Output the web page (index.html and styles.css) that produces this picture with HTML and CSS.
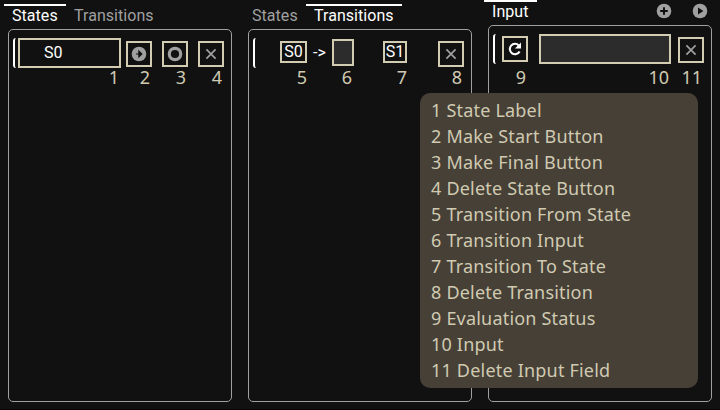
FILE: index.html
```html
<!DOCTYPE html>
<html lang="en">
<head>
<meta charset="utf-8">
<title>Automaton Panels</title>
<link rel="stylesheet" href="styles.css">
</head>
<body>
<main class="columns">
  <section class="column">
    <nav class="tabs"><span class="tab active">States</span><span class="tab wide">Transitions</span></nav>
    <div class="panel">
      <div class="row">
        <i class="bracket"></i>
        <div class="box state-label">S0<b class="num n1">1</b></div>
        <div class="box button"><svg width="16" height="16" viewBox="0 0 16 16"><circle cx="8" cy="8" r="7.3" fill="#a0a0a0"/><path d="M5 8h4M7.9 5.1 10.8 8l-2.9 2.9z" fill="#111" stroke="#111" stroke-width="1.2"/></svg><b class="num n2">2</b></div>
        <div class="box button next"><svg width="16" height="16" viewBox="0 0 16 16"><circle cx="8" cy="8" r="5.7" fill="none" stroke="#a0a0a0" stroke-width="3.2"/></svg><b class="num n3">3</b></div>
        <div class="box button next"><svg width="16" height="16" viewBox="0 0 16 16"><path d="m3.4 3.4 9.2 9.2m0-9.2-9.2 9.2" fill="none" stroke="#a0a0a0" stroke-width="1.7"/></svg><b class="num n4">4</b></div>
      </div>
    </div>
  </section>
  <section class="column">
    <nav class="tabs"><span class="tab">States</span><span class="tab wide active">Transitions</span></nav>
    <div class="panel">
      <div class="row">
        <i class="bracket"></i>
        <div class="box from">S0<b class="num n5">5</b></div>
        <span class="arrow">-&gt;</span>
        <div class="box symbol"><b class="num n6">6</b></div>
        <div class="box to">S1<b class="num n7">7</b></div>
        <div class="box button last"><svg width="16" height="16" viewBox="0 0 16 16"><path d="m3.4 3.4 9.2 9.2m0-9.2-9.2 9.2" fill="none" stroke="#a0a0a0" stroke-width="1.7"/></svg><b class="num n8">8</b></div>
      </div>
    </div>
  </section>
  <section class="column input-column">
    <nav class="tabs"><span class="tab single active">Input</span>
      <span class="tools">
        <svg width="16" height="16" viewBox="0 0 16 16"><circle cx="8" cy="8" r="7.3" fill="#a0a0a0"/><path d="M8 4.2v7.6M4.2 8h7.6" stroke="#111" stroke-width="2"/></svg>
        <svg width="16" height="16" viewBox="0 0 16 16"><circle cx="8" cy="8" r="7.3" fill="#a0a0a0"/><path d="m6 4.6 5.4 3.4L6 11.4z" fill="#111"/></svg>
      </span>
    </nav>
    <div class="panel">
      <div class="row">
        <i class="bracket"></i>
        <div class="box button status"><svg width="16" height="16" viewBox="0 0 16 16"><path d="M12.6 10.5A5.2 5.2 0 1 1 11.8 4.4" fill="none" stroke="#fff" stroke-width="2.1"/><path d="M14 1.5V7.6H7.9z" fill="#fff"/></svg><b class="num n9">9</b></div>
        <div class="box field"><b class="num n10">10</b></div>
        <div class="box button clear"><svg width="16" height="16" viewBox="0 0 16 16"><path d="m3.4 3.4 9.2 9.2m0-9.2-9.2 9.2" fill="none" stroke="#a0a0a0" stroke-width="1.7"/></svg><b class="num n11">11</b></div>
      </div>
    </div>
  </section>
</main>
<div class="legend">
  <p>1 State Label</p>
  <p>2 Make Start Button</p>
  <p>3 Make Final Button</p>
  <p>4 Delete State Button</p>
  <p>5 Transition From State</p>
  <p>6 Transition Input</p>
  <p>7 Transition To State</p>
  <p>8 Delete Transition</p>
  <p>9 Evaluation Status</p>
  <p>10 Input</p>
  <p>11 Delete Input Field</p>
</div>
</body>
</html>
```

FILE: styles.css
```css
* { box-sizing: border-box; }
body {
  margin: 0;
  height: 410px;
  overflow: hidden;
  background: #111;
  color: #fff;
  font: 16px/20px Roboto, sans-serif;
  border-bottom: 1px solid #0c0308;
}
.columns {
  display: grid;
  grid-template-columns: repeat(3, 224px);
  gap: 16px;
  padding: 4px 8px 0;
  height: 402px;
}
.column { display: flex; flex-direction: column; }
.input-column { margin-top: -4px; }
.tabs { display: flex; height: 25px; margin-left: -4px; flex: none; }
.tab { width: 62px; padding: 0 8px; border-top: 2px solid transparent; color: #a0a0a0; letter-spacing: 0.05px; }
.wide { width: 96px; }
.single { width: 53px; }
.tab.active { border-color: #fff; color: #fff; }
.tools { display: flex; gap: 20px; margin: 3px 4px 0 auto; }
.panel { flex: 1; border: 1px solid #a0a0a0; border-radius: 5px; padding: 8px 7px 0 4px; }
.row { display: flex; align-items: center; height: 30px; }
.bracket { width: 3px; height: 30px; border-left: 2px solid #fff; border-radius: 3px 0 0 3px; flex: none; }
.box { position: relative; border: 2px solid #d2ccb3; flex: none; display: flex; align-items: center; justify-content: center; }
.button { width: 26px; height: 26px; margin-top: 2px; }
.next { margin-left: 10px; }
.state-label { width: 103px; height: 30px; margin: 0 5px 0 2px; justify-content: flex-start; padding-left: 24px; }
.from { width: 27px; height: 22px; margin: -2px 0 0 24px; line-height: 22px; }
.arrow { width: 13px; margin: 0 6px; white-space: nowrap; }
.symbol { width: 22px; height: 27px; background: #2c2c2c; margin-top: -1px; }
.to { width: 24px; height: 22px; margin: -2px 0 0 29px; line-height: 22px; }
.last { margin-left: 31px; }
.status { margin: 0 0 0 6px; }
.field { width: 132px; height: 30px; margin: 0 7px 0 11px; background: #2c2c2c; }
.num { position: absolute; right: 0; font: 18px/22px "Noto Sans", sans-serif; color: #d0cab1; }
.n1 { top: 26px; }
.n2, .n3, .n4, .n8 { top: 23px; }
.n5, .n7 { top: 23px; right: -2px; }
.n6 { top: 25px; }
.n9 { top: 28px; }
.n10 { top: 30px; }
.n11 { top: 27px; }
.legend {
  position: absolute;
  left: 420px;
  top: 93px;
  width: 278px;
  height: 295px;
  padding: 4px 0 0 11px;
  border-radius: 10px;
  background: #464037;
  color: #d0cab1;
  font: 18px/26px "Noto Sans", sans-serif;
  letter-spacing: 0.2px;
  white-space: nowrap;
}
.legend p { margin: 0; }
```
